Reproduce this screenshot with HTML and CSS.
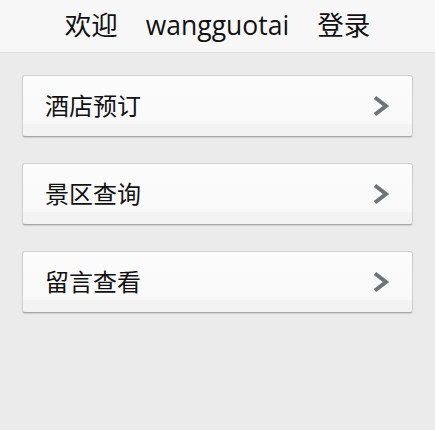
FILE: index.html
```html
<!DOCTYPE html>
<html lang="zh">
<head>
<meta charset="utf-8">
<link rel="stylesheet" href="styles.css">
</head>
<body>
<header class="topbar">
  <span class="word">欢迎</span>
  <span class="word">wangguotai</span>
  <span class="word">登录</span>
</header>
<main class="list">
  <a class="item"><span class="label">酒店预订</span><svg class="chev" viewBox="0 0 18 22" width="18" height="22"><path d="M3 2.5 L14 11 L3 19.5" fill="none" stroke="#707474" stroke-width="4"/></svg></a>
  <a class="item"><span class="label">景区查询</span><svg class="chev" viewBox="0 0 18 22" width="18" height="22"><path d="M3 2.5 L14 11 L3 19.5" fill="none" stroke="#707474" stroke-width="4"/></svg></a>
  <a class="item"><span class="label">留言查看</span><svg class="chev" viewBox="0 0 18 22" width="18" height="22"><path d="M3 2.5 L14 11 L3 19.5" fill="none" stroke="#707474" stroke-width="4"/></svg></a>
</main>
</body>
</html>
```
FILE: styles.css
```css
html, body {
  margin: 0;
  padding: 0;
  height: 100%;
}
body {
  background: #ebebeb;
  font-family: "Open Sans", "Noto Sans CJK SC", sans-serif;
  color: #111;
}
.topbar {
  background: #f8f7f8;
  border-bottom: 1px solid #dedede;
  display: flex;
  justify-content: center;
  align-items: center;
  gap: 28px;
  font-size: 26.5px;
  padding-bottom: 1px;
  box-sizing: border-box;
  height: 53px;
}
.word {
  line-height: 1;
}
.list {
  display: flex;
  flex-direction: column;
  gap: 26px;
  padding: 22px 22px 0 22px;
}
.item {
  display: flex;
  align-items: center;
  justify-content: space-between;
  height: 60px;
  border: 1px solid #cfcfcf;
  border-bottom-color: #a8a8a8;
  border-radius: 3px;
  background: linear-gradient(#fcfbfc 0%, #faf9fa 80%, #f3f3f3 81%, #f3f3f3 100%);
  box-shadow: 0 1px 1px rgba(0,0,0,0.12);
  padding: 0 22px 0 22px;
}
.label {
  font-size: 24px;
  line-height: 1;
  color: #111;
}
.chev {
  display: block;
}
```
